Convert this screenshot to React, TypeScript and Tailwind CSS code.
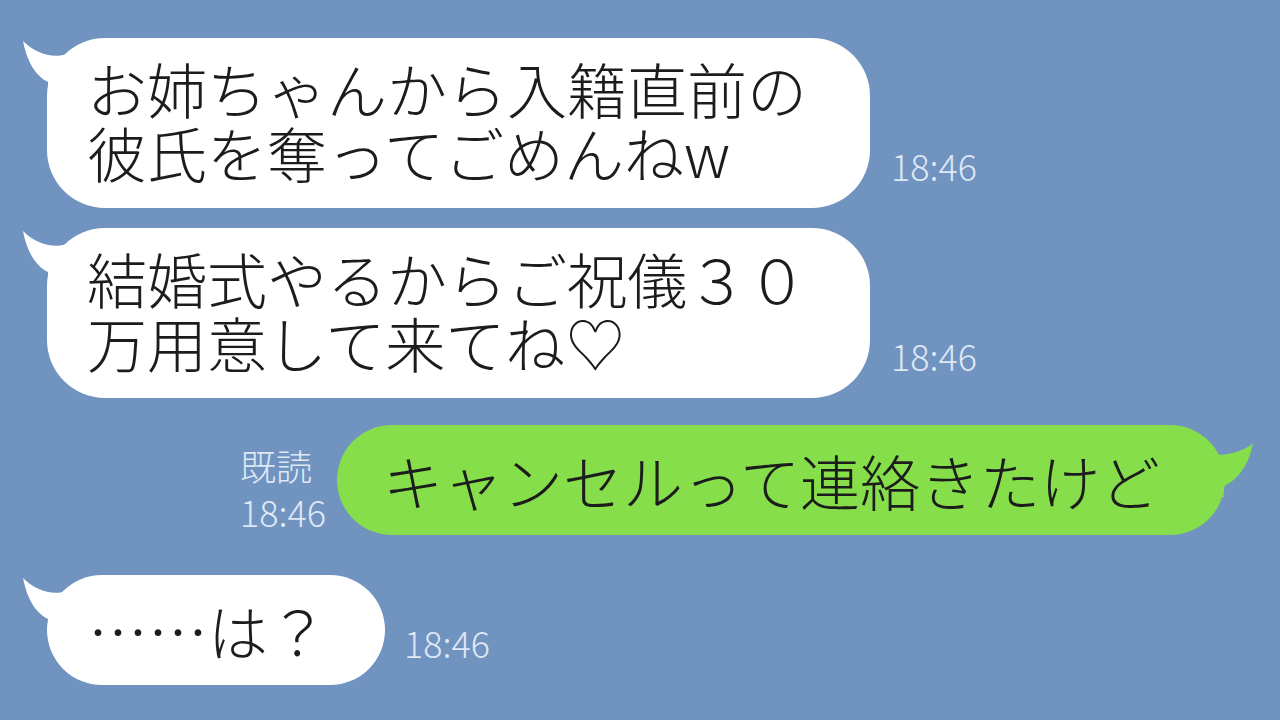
import React from "react";

const FONT = { fontFamily: '"Noto Sans CJK JP", "Noto Sans", sans-serif' };

function LeftTail() {
  return (
    <svg
      className="absolute left-[-30px] top-[-5px]"
      width="80"
      height="70"
      viewBox="0 0 80 70"
    >
      <path
        d="M 6 8 C 18 20, 35 26, 50 21 L 72 10 L 72 66 L 33 66 L 31 49 C 20 44, 10 30, 6 8 Z"
        fill="#ffffff"
      />
    </svg>
  );
}

function RightTail() {
  return (
    <svg
      className="absolute right-[-35px] top-0"
      width="70"
      height="80"
      viewBox="0 0 70 80"
    >
      <path
        d="M 63 18 C 57 24, 42 30, 27 30 L 8 25 L 8 72 L 34 72 L 32 62 C 42 58, 58 46, 63 18 Z"
        fill="#86de4b"
      />
    </svg>
  );
}

function Time({ className = "" }: { className?: string }) {
  return (
    <div className={`text-[36px] font-light leading-none text-[#dfe8f4] ${className}`}>18:46</div>
  );
}

export default function App() {
  return (
    <div
      className="w-[1280px] h-[720px] overflow-hidden bg-[#7093c0] flex flex-col pt-[38px] text-[#1c1c1c] font-light"
      style={FONT}
    >
      {/* Row 1 */}
      <div className="flex items-end pl-[47px] gap-[21px]">
        <div className="relative w-[823px] h-[170px] bg-white rounded-[58px] flex flex-col justify-center pl-[40px] pb-[6px] text-[60px] leading-[64px]">
          <LeftTail />
          <div className="relative">
            お姉ちゃんから入籍直前の
            <br />
            彼氏を奪ってごめんねw
          </div>
        </div>
        <Time className="mb-[25px]" />
      </div>

      {/* Row 2 */}
      <div className="flex items-end pl-[47px] gap-[21px] mt-[20px]">
        <div className="relative w-[823px] h-[170px] bg-white rounded-[58px] flex flex-col justify-center pl-[40px] pb-[6px] text-[60px] leading-[64px]">
          <LeftTail />
          <div className="relative">
            結婚式やるからご祝儀３０
            <br />
            万用意して来てね♡
          </div>
        </div>
        <Time className="mb-[25px]" />
      </div>

      {/* Row 3 */}
      <div className="flex items-end justify-end pr-[55px] gap-[11px] mt-[27px]">
        <div className="text-[36px] leading-[46px] text-[#dfe8f4] mb-[1px]">
          既読
          <br />
          18:46
        </div>
        <div className="relative w-[888px] h-[110px] bg-[#86de4b] rounded-[55px] flex items-center pl-[46px] text-[60px] leading-[64px]">
          <RightTail />
          <div className="relative">キャンセルって連絡きたけど</div>
        </div>
      </div>

      {/* Row 4 */}
      <div className="flex items-end pl-[47px] gap-[19px] mt-[40px]">
        <div className="relative w-[338px] h-[110px] bg-white rounded-[55px] flex items-center pl-[41px] text-[60px] leading-[64px]">
          <LeftTail />
          <div className="relative">……は？</div>
        </div>
        <Time className="mb-[25px]" />
      </div>
    </div>
  );
}
